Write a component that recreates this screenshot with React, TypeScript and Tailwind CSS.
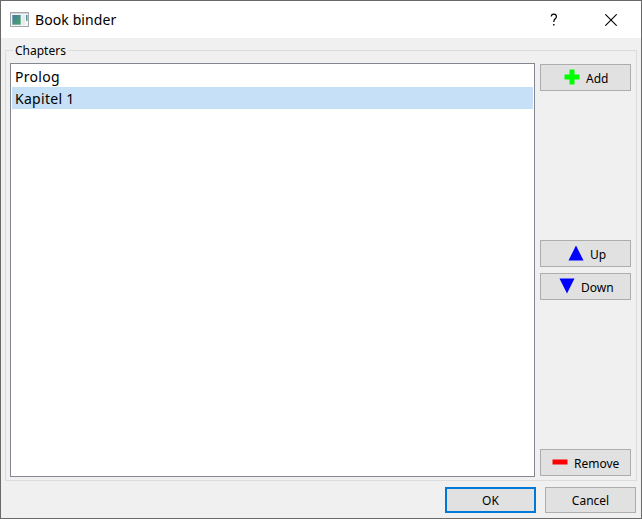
import type { ReactNode } from "react";

function PushButton({ children, className = "" }: { children: ReactNode; className?: string }) {
  return (
    <button
      type="button"
      className={`flex w-[91px] shrink-0 items-center border bg-[#e1e1e1] text-[12px] leading-[16px] text-black ${className}`}
    >
      {children}
    </button>
  );
}

function WindowIcon() {
  return (
    <svg width="20" height="16" viewBox="0 0 20 16" className="shrink-0">
      <defs>
        <linearGradient id="screen" x1="0" y1="0" x2="1" y2="1">
          <stop offset="0" stopColor="#4779a0" />
          <stop offset="1" stopColor="#45a866" />
        </linearGradient>
        <linearGradient id="strip" x1="0" y1="0" x2="0" y2="1">
          <stop offset="0" stopColor="#4b83b4" />
          <stop offset="1" stopColor="#55b075" />
        </linearGradient>
      </defs>
      <rect x="0.5" y="0.5" width="18" height="14" fill="#f5f5f5" stroke="#a3a8ad" />
      <rect x="1" y="1" width="17" height="1" fill="#d3d7da" />
      <rect x="2" y="3" width="9" height="10" fill="#b8cbd0" />
      <rect x="2.5" y="3" width="8" height="9.5" fill="url(#screen)" />
      <rect x="12" y="3" width="3" height="10" fill="#e9ecee" />
      <rect x="16" y="3" width="1.5" height="6" fill="url(#strip)" />
    </svg>
  );
}

export default function App() {
  return (
    <div className="flex h-[519px] w-[642px] flex-col overflow-hidden border border-[#696969] bg-[#f0f0f0] font-['Noto_Sans',sans-serif] text-black">
      <header className="flex h-[37px] shrink-0 items-center bg-white pl-[9px]">
        <WindowIcon />
        <h1 className="ml-[5px] flex-1 text-[14px] leading-[20px] tracking-[0.1px] whitespace-nowrap">Book binder</h1>
        <svg width="9" height="14" viewBox="0 0 9 14" className="mr-[46px]" fill="none" stroke="#000" strokeWidth="1.2">
          <path d="M1.3 3.4Q1.3 1.1 3.8 1.1Q6.4 1.1 6.4 3.5Q6.4 4.8 5.2 5.8Q3.8 7 3.8 9" />
          <path d="M3.1 11.8H4.5" strokeWidth="1.6" />
        </svg>
        <svg width="12" height="12" viewBox="0 0 12 12" className="mr-[24px]" stroke="#000" strokeWidth="1.1">
          <path d="M0.3 0.3L11.7 11.7M11.7 0.3L0.3 11.7" />
        </svg>
      </header>

      <fieldset className="mt-[4px] ml-[4px] h-[439px] w-[632px] shrink-0 border border-[#dcdcdc] pl-[4px]">
        <legend className="ml-[3px] h-[17px] px-[2px] text-[12px] leading-[17px]">Chapters</legend>
        <div className="mt-[4px] flex h-[414px]">
          <ul className="w-[525px] shrink-0 border border-[#828790] bg-white p-px text-[14px] leading-[22px] tracking-[0.3px]">
            <li className="h-[22px] pt-px pl-[3px]">Prolog</li>
            <li className="h-[22px] bg-[#c5e0f7] pt-px pl-[3px]">Kapitel 1</li>
          </ul>
          <div className="ml-[5px] flex flex-col pt-px">
            <PushButton className="h-[27px] border-[#adadad] pl-[23px]">
              <svg width="16" height="16" viewBox="0 0 16 16" className="mt-[-1px] mr-[6px]">
                <path d="M5.5 0.5H10.5V5.5H15.5V10.5H10.5V15.5H5.5V10.5H0.5V5.5H5.5Z" fill="#0f0" />
              </svg>
              <span className="pt-[2px]">Add</span>
            </PushButton>
            <PushButton className="mt-[149px] h-[27px] border-[#adadad] pl-[27px]">
              <svg width="16" height="16" viewBox="0 0 16 16" className="mt-[-1px] mr-[6px]">
                <path d="M8 0.5L15.5 15.5H0.5Z" fill="#00f" />
              </svg>
              <span className="pt-[2px]">Up</span>
            </PushButton>
            <PushButton className="mt-[6px] h-[27px] border-[#adadad] pl-[18px]">
              <svg width="16" height="16" viewBox="0 0 16 16" className="mt-[-1px] mr-[6px]">
                <path d="M0.5 0.5H15.5L8 15.5Z" fill="#00f" />
              </svg>
              <span className="pt-[2px]">Down</span>
            </PushButton>
            <PushButton className="mt-[149px] h-[27px] border-[#adadad] pl-[11px]">
              <svg width="16" height="16" viewBox="0 0 16 16" className="mt-[-1px] mr-[6px]">
                <rect x="0.5" y="5.5" width="15" height="5" fill="#f00" />
              </svg>
              <span className="pt-[2px]">Remove</span>
            </PushButton>
          </div>
        </div>
      </fieldset>

      <footer className="mt-[6px] ml-[444px] flex gap-[9px]">
        <PushButton className="h-[26px] justify-center border-2 border-[#0078d7]">
          <span className="pt-[2px]">OK</span>
        </PushButton>
        <PushButton className="h-[26px] justify-center border-[#adadad]">
          <span className="pt-[2px]">Cancel</span>
        </PushButton>
      </footer>
    </div>
  );
}
